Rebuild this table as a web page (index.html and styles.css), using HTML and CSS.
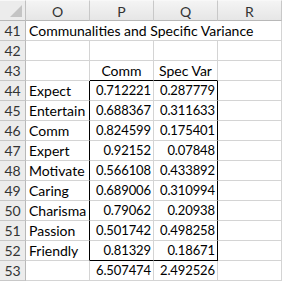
FILE: index.html
```html
<!DOCTYPE html>
<html>
<head>
<meta charset="utf-8">
<link rel="stylesheet" href="styles.css">
</head>
<body>
<div class="sheet">
  <div class="corner"><span class="tri"></span></div>
  <div class="colhdr">O</div>
  <div class="colhdr">P</div>
  <div class="colhdr">Q</div>
  <div class="colhdr">R</div>

  <div class="rowhdr">41</div>
  <div class="cell title">Communalities and Specific Variance</div>

  <div class="rowhdr">42</div>
  <div class="cell"></div><div class="cell"></div><div class="cell"></div><div class="cell"></div>

  <div class="rowhdr">43</div>
  <div class="cell"></div>
  <div class="cell center btop">Comm</div>
  <div class="cell center btop">Spec Var</div>
  <div class="cell"></div>

  <div class="rowhdr">44</div>
  <div class="cell bleft">Expect</div>
  <div class="cell num">0.712221</div>
  <div class="cell num bright">0.287779</div>
  <div class="cell"></div>

  <div class="rowhdr">45</div>
  <div class="cell bleft">Entertain</div>
  <div class="cell num">0.688367</div>
  <div class="cell num bright">0.311633</div>
  <div class="cell"></div>

  <div class="rowhdr">46</div>
  <div class="cell bleft">Comm</div>
  <div class="cell num">0.824599</div>
  <div class="cell num bright">0.175401</div>
  <div class="cell"></div>

  <div class="rowhdr">47</div>
  <div class="cell bleft">Expert</div>
  <div class="cell num">0.92152</div>
  <div class="cell num bright">0.07848</div>
  <div class="cell"></div>

  <div class="rowhdr">48</div>
  <div class="cell bleft">Motivate</div>
  <div class="cell num">0.566108</div>
  <div class="cell num bright">0.433892</div>
  <div class="cell"></div>

  <div class="rowhdr">49</div>
  <div class="cell bleft">Caring</div>
  <div class="cell num">0.689006</div>
  <div class="cell num bright">0.310994</div>
  <div class="cell"></div>

  <div class="rowhdr">50</div>
  <div class="cell bleft">Charisma</div>
  <div class="cell num">0.79062</div>
  <div class="cell num bright">0.20938</div>
  <div class="cell"></div>

  <div class="rowhdr">51</div>
  <div class="cell bleft">Passion</div>
  <div class="cell num">0.501742</div>
  <div class="cell num bright">0.498258</div>
  <div class="cell"></div>

  <div class="rowhdr">52</div>
  <div class="cell bleft">Friendly</div>
  <div class="cell num bbottom">0.81329</div>
  <div class="cell num bright bbottom">0.18671</div>
  <div class="cell"></div>

  <div class="rowhdr">53</div>
  <div class="cell"></div>
  <div class="cell num">6.507474</div>
  <div class="cell num">2.492526</div>
  <div class="cell"></div>
</div>
</body>
</html>
```

FILE: styles.css
```css
html, body {
  margin: 0;
  padding: 0;
  background: #ffffff;
}

.sheet {
  display: grid;
  grid-template-columns: 26px 64px 64px 64px 64px;
  grid-template-rows: 21px repeat(13, 20px);
  font-family: Lato, "Liberation Sans", sans-serif;
  font-size: 14px;
  color: #000000;
}

.sheet > div {
  box-sizing: border-box;
  border-right: 1px solid #d4d4d4;
  border-bottom: 1px solid #d4d4d4;
  white-space: nowrap;
}

.corner {
  background: #ececec;
  position: relative;
  border-right-color: #c0c0c0 !important;
  border-bottom-color: #b8b8b8 !important;
  border-top: 1px solid #f8f8f8;
}

.tri {
  position: absolute;
  right: 3px;
  bottom: 3px;
  width: 0;
  height: 0;
  border-left: 12px solid transparent;
  border-bottom: 12px solid #c4c4c4;
}

.colhdr {
  background: linear-gradient(#f4f4f4, #e6e6e6);
  border-right-color: #c8c8c8 !important;
  border-bottom-color: #b8b8b8 !important;
  border-top: 1px solid #f8f8f8;
  display: flex;
  align-items: center;
  justify-content: center;
  color: #333333;
  padding-top: 1px;
}

.rowhdr {
  background: #ececec;
  border-right-color: #b8b8b8 !important;
  border-bottom-color: #c8c8c8 !important;
  display: flex;
  align-items: flex-end;
  justify-content: center;
  color: #333333;
  padding-bottom: 1px;
  line-height: 17px;
}

.cell {
  display: flex;
  align-items: flex-end;
  padding: 0 3px 1px 3px;
  line-height: 17px;
  overflow: visible;
}

.title {
  grid-column: span 4;
}

.num {
  justify-content: flex-end;
  padding-right: 2px;
  font-size: 13px;
  letter-spacing: -0.1px;
}

.center {
  justify-content: center;
}

.sheet > .btop {
  border-bottom-color: #000000;
}

.sheet > .bleft {
  border-right-color: #000000;
}

.sheet > .bright {
  border-right-color: #000000;
}

.sheet > .bbottom {
  border-bottom-color: #000000;
}
```
